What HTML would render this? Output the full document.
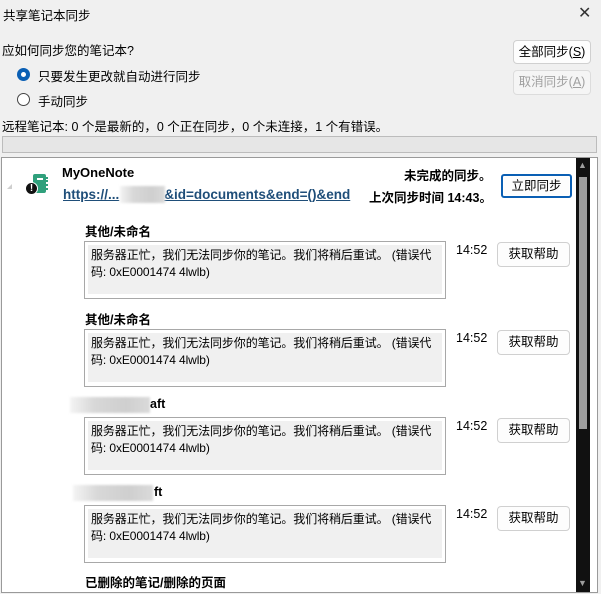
<!DOCTYPE html>
<html><head><meta charset="utf-8"><style>
*{margin:0;padding:0;box-sizing:border-box}
body{width:601px;height:594px;background:#f0f0f0;font-family:"Liberation Sans","Noto Sans CJK SC",sans-serif;font-size:12.5px;color:#000;position:relative;overflow:hidden}
.a{position:absolute;white-space:nowrap}
.btn{position:absolute;background:#fdfdfd;border:1px solid #d0d0d0;border-radius:4px;text-align:center;font-size:12.5px}
.b{font-weight:bold}
.box{position:absolute;left:84px;width:362px;height:58px;border:1px solid #a8a8a8;background:#fff;padding:3px 3px 4px 3px}
.box div{background:#f0f0f0;height:100%;padding:2px 0 0 3px;line-height:17px;font-size:12px;letter-spacing:-0.1px;white-space:normal}
.blur{position:absolute;background:linear-gradient(90deg,#f4f4f4,#d8d8d8 30%,#cfcfcf 70%,#dadada);filter:blur(1px)}
</style></head><body>
<div class="a" style="left:3px;top:5px">共享笔记本同步</div>
<div class="a" style="left:578px;top:3px;font-size:16px;color:#333;font-weight:300">✕</div>
<div class="a" style="left:2px;top:40px">应如何同步您的笔记本?</div>
<div class="btn" style="left:513px;top:40px;width:78px;height:24px;line-height:22px">全部同步(<u>S</u>)</div>
<div class="btn" style="left:513px;top:70px;width:78px;height:25px;line-height:23px;color:#a0a0a0;background:#f5f5f5;border-color:#dcdcdc">取消同步(<u>A</u>)</div>
<div class="a" style="left:17px;top:68px;width:13px;height:13px;border-radius:50%;background:#0a5fb4"></div>
<div class="a" style="left:21px;top:72px;width:5px;height:5px;border-radius:50%;background:#fff"></div>
<div class="a" style="left:38px;top:66px">只要发生更改就自动进行同步</div>
<div class="a" style="left:17px;top:93px;width:13px;height:13px;border-radius:50%;border:1px solid #444;background:#fff"></div>
<div class="a" style="left:38px;top:91px">手动同步</div>
<div class="a" style="left:2px;top:116px">远程笔记本: 0 个是最新的，0 个正在同步，0 个未连接，1 个有错误。</div>
<div class="a" style="left:2px;top:136px;width:595px;height:17px;background:#e6e6e6;border:1px solid #bcbcbc"></div>
<div class="a" style="left:1px;top:157px;width:597px;height:436px;background:#fff;border:1px solid #9a9a9a"></div>
<div class="a" style="left:576px;top:158px;width:14px;height:434px;background:#111"></div>
<div class="a" style="left:579px;top:177px;width:8px;height:252px;background:#9e9e9e"></div>
<div class="a" style="left:578px;top:160px;font-size:9px;color:#9e9e9e">▲</div>
<div class="a" style="left:578px;top:578px;font-size:9px;color:#9e9e9e">▼</div>
<div class="a" style="left:7px;top:184px;width:0;height:0;border-left:5px solid transparent;border-bottom:5px solid #cfcfcf"></div>
<div class="a" style="left:33px;top:174px;width:13px;height:19px;background:#2fa07c;border-radius:2px"></div>
<div class="a" style="left:37px;top:178px;width:6px;height:2px;background:#fff"></div>
<div class="a" style="left:46px;top:177px;width:2px;height:13px;border-left:2px dotted #2fa07c"></div>
<div class="a" style="left:25px;top:182px;width:13px;height:13px;border-radius:50%;background:#111;border:1.5px solid #fff;color:#fff;font-size:10px;font-weight:bold;line-height:11px;text-align:center">!</div>
<div class="a b" style="left:62px;top:165px;font-size:13px">MyOneNote</div>
<div class="a b" style="left:63px;top:187px;color:#1f4e79;text-decoration:underline;font-size:13.5px">https://...<span style="display:inline-block;width:45px"></span>&amp;id=documents&amp;end=()&amp;end</div>
<div class="blur" style="left:120px;top:186px;width:45px;height:17px"></div>
<div class="a b" style="left:404px;top:165px">未完成的同步。</div>
<div class="a b" style="left:369px;top:187px">上次同步时间 14:43。</div>
<div class="btn" style="left:501px;top:174px;width:71px;height:24px;line-height:20px;border:2px solid #0a5fb4;border-radius:3px;box-shadow:inset 0 0 0 1px #fff">立即同步</div>

<div class="a b" style="left:85px;top:221px">其他/未命名</div>
<div class="box" style="top:241px"><div>服务器正忙，我们无法同步你的笔记。我们将稍后重试。 (错误代码: 0xE0001474 4lwlb)</div></div>
<div class="a" style="left:456px;top:243px">14:52</div>
<div class="btn" style="left:497px;top:242px;width:73px;height:25px;line-height:23px">获取帮助</div>

<div class="a b" style="left:85px;top:309px">其他/未命名</div>
<div class="box" style="top:329px"><div>服务器正忙，我们无法同步你的笔记。我们将稍后重试。 (错误代码: 0xE0001474 4lwlb)</div></div>
<div class="a" style="left:456px;top:331px">14:52</div>
<div class="btn" style="left:497px;top:330px;width:73px;height:25px;line-height:23px">获取帮助</div>

<div class="blur" style="left:70px;top:397px;width:80px;height:16px"></div>
<div class="a b" style="left:150px;top:397px">aft</div>
<div class="box" style="top:417px"><div>服务器正忙，我们无法同步你的笔记。我们将稍后重试。 (错误代码: 0xE0001474 4lwlb)</div></div>
<div class="a" style="left:456px;top:419px">14:52</div>
<div class="btn" style="left:497px;top:418px;width:73px;height:25px;line-height:23px">获取帮助</div>

<div class="blur" style="left:73px;top:485px;width:80px;height:16px"></div>
<div class="a b" style="left:154px;top:485px">ft</div>
<div class="box" style="top:505px"><div>服务器正忙，我们无法同步你的笔记。我们将稍后重试。 (错误代码: 0xE0001474 4lwlb)</div></div>
<div class="a" style="left:456px;top:507px">14:52</div>
<div class="btn" style="left:497px;top:506px;width:73px;height:25px;line-height:23px">获取帮助</div>

<div class="a b" style="left:85px;top:572px">已删除的笔记/删除的页面</div>
</body></html>
